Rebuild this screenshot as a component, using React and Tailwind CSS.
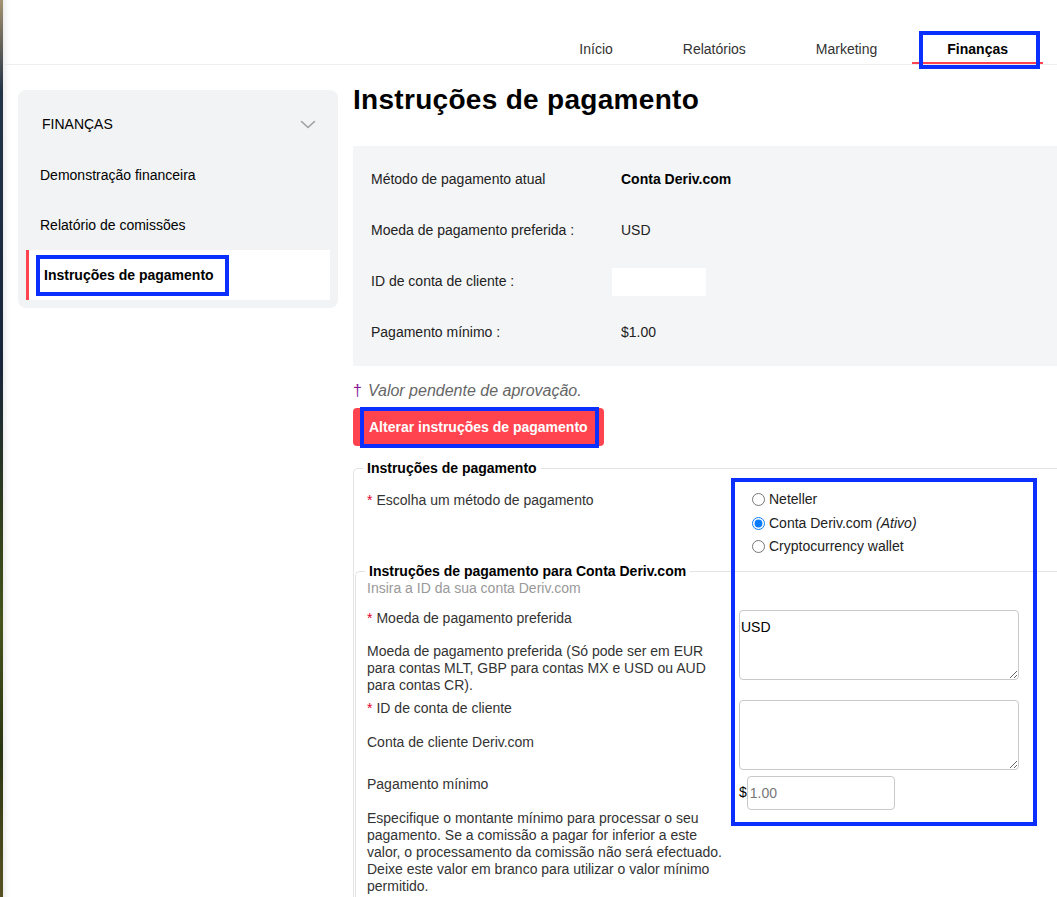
import React from 'react';

const font = { fontFamily: '"Liberation Sans", Arial, sans-serif' };

const tabs = ['Início', 'Relatórios', 'Marketing', 'Finanças'];

const infoRows = [
  { label: 'Método de pagamento atual', value: 'Conta Deriv.com', bold: true },
  { label: 'Moeda de pagamento preferida :', value: 'USD' },
  { label: 'ID de conta de cliente :', blank: true },
  { label: 'Pagamento mínimo :', value: '$1.00' },
];

function Req() {
  return <span className="text-[#e4002b] mr-[4px]">*</span>;
}

function Chevron() {
  return (
    <svg width="16" height="9" viewBox="0 0 16 9" fill="none" stroke="#9a9a9a" strokeWidth="1.4" strokeLinecap="round" strokeLinejoin="round">
      <polyline points="1.5,1.5 8,7.5 14.5,1.5" />
    </svg>
  );
}

function Radio({ checked, children }) {
  return (
    <label className="flex items-center gap-[4px] h-[23.5px]">
      <input type="radio" name="method" defaultChecked={checked} className="w-[13px] h-[13px] m-0 accent-[#0a7cff]" />
      <span>{children}</span>
    </label>
  );
}

export default function App() {
  return (
    <div className="relative flex min-h-screen bg-white text-[14px] leading-[17px] text-[#333]" style={font}>
      {/* desktop wallpaper peeking at the edge */}
      <div className="w-[3px] shrink-0 bg-[linear-gradient(to_bottom,#a39272_0%,#6f6a5c_4%,#233449_10%,#17243a_40%,#2c3a1c_55%,#46541c_68%,#2a3512_82%,#5c5424_100%)]" />

      <div className="flex-1 min-w-0 shadow-[inset_7px_0_6px_-5px_rgba(0,0,0,0.10)]">
        {/* header */}
        <div className="h-[65px] border-b border-[#eeeeee] flex items-end justify-end pr-[14px]">
          {tabs.map(t => {
            const active = t === 'Finanças';
            return (
              <div
                key={t}
                className={`relative h-[32px] pt-[9px] px-[35px] border-b-2 ${active ? 'border-[#ff444f] font-bold text-black' : 'border-transparent'}`}
              >
                {t}
                {active && (
                  <div className="absolute left-[7px] right-[3px] top-[-1px] bottom-[-7px] border-4 border-[#0b2fff]" />
                )}
              </div>
            );
          })}
        </div>

        <div className="flex pl-[15px] gap-[15px]">
          {/* sidebar */}
          <div className="w-[320px] shrink-0 mt-[25px] self-start bg-[#f2f3f4] rounded-[8px] p-[8px]">
            <div className="h-[52px] flex items-center justify-between pl-[16px] pr-[14px] text-black">
              <span>FINANÇAS</span>
              <Chevron />
            </div>
            <div className="h-[50px] flex items-center pl-[14px] text-black">Demonstração financeira</div>
            <div className="h-[50px] flex items-center pl-[14px] text-black">Relatório de comissões</div>
            <div className="relative h-[50px] flex items-center bg-white border-l-[3px] border-[#ff444f] pl-[15px] font-bold text-black">
              Instruções de pagamento
              <div className="absolute left-[7px] top-[5px] w-[193px] h-[41px] border-4 border-[#0b2fff]" />
            </div>
          </div>

          {/* main */}
          <div className="flex-1 min-w-0">
            <h1 className="mt-[19px] text-[28px] leading-[32px] tracking-[0.3px] font-bold text-black">Instruções de pagamento</h1>

            <div className="mt-[30px] bg-[#f4f5f6] py-[8px]">
              {infoRows.map(r => (
                <div key={r.label} className="h-[51px] flex items-center pl-[18px]">
                  <div className="w-[241px] shrink-0 text-[#222]">{r.label}</div>
                  {r.blank ? (
                    <div className="w-[94px] h-[28px] bg-white" />
                  ) : (
                    <div className={`pl-[9px] ${r.bold ? 'font-bold text-black' : 'text-[#222]'}`}>{r.value}</div>
                  )}
                </div>
              ))}
            </div>

            <p className="mt-[15px] text-[16px] leading-[20px]">
              <span className="text-[#8a1c9a] mr-[6px]">†</span>
              <span className="italic text-[#666]">Valor pendente de aprovação.</span>
            </p>

            <div className="mt-[7px]">
              <button className="relative h-[38px] px-[16px] bg-[#ff444f] rounded-[4px] text-white font-bold text-[14px]">
                Alterar instruções de pagamento
                <span className="absolute left-[7px] right-[5px] top-[-1px] bottom-[-2px] border-4 border-[#0b2fff]" />
              </button>
            </div>

            <fieldset className="mt-[14px] border-t border-l border-[#e3e3e3] rounded-tl-[5px]">
              <legend className="ml-[9px] px-[4px] font-bold text-black">Instruções de pagamento</legend>

              <div className="flex pl-[13px] pt-[11px] pb-[4px]">
                <div className="w-[360px] shrink-0 pt-[4px]"><Req />Escolha um método de pagamento</div>
                <div className="ml-[12px] pl-[13px] flex flex-col text-[#222]">
                  <Radio>Neteller</Radio>
                  <Radio checked>Conta Deriv.com <i>(Ativo)</i></Radio>
                  <Radio>Cryptocurrency wallet</Radio>
                </div>
              </div>

              <fieldset className="ml-[1px] border-t border-l border-[#e3e3e3] rounded-tl-[5px]">
                <legend className="ml-[9px] px-[4px] font-bold text-black">Instruções de pagamento para Conta Deriv.com</legend>
                <div className="pl-[11px] text-[#999]">Insira a ID da sua conta Deriv.com</div>

                <div className="flex flex-col gap-[6px] pl-[11px] pt-[13px] pb-[20px]">
                  <div className="flex items-start">
                    <div className="w-[360px] shrink-0">
                      <div><Req />Moeda de pagamento preferida</div>
                      <div className="mt-[16px]">Moeda de pagamento preferida (Só pode ser em EUR para contas MLT, GBP para contas MX e USD ou AUD para contas CR).</div>
                    </div>
                    <textarea defaultValue="USD" className="ml-[12px] w-[280px] h-[70px] border border-[#c9c9c9] rounded-[4px] pt-[8px] px-[1px] text-black leading-[17px] outline-none" />
                  </div>

                  <div className="flex items-start">
                    <div className="w-[360px] shrink-0">
                      <div><Req />ID de conta de cliente</div>
                      <div className="mt-[17px]">Conta de cliente Deriv.com</div>
                    </div>
                    <textarea className="ml-[12px] w-[280px] h-[70px] border border-[#c9c9c9] rounded-[4px] pt-[8px] px-[1px] outline-none" />
                  </div>

                  <div className="flex items-start">
                    <div className="w-[360px] shrink-0">
                      <div>Pagamento mínimo</div>
                      <div className="mt-[17px]">Especifique o montante mínimo para processar o seu pagamento. Se a comissão a pagar for inferior a este valor, o processamento da comissão não será efectuado. Deixe este valor em branco para utilizar o valor mínimo permitido.</div>
                    </div>
                    <div className="ml-[12px] flex items-center text-black">
                      <span>$</span>
                      <input placeholder="1.00" className="w-[148px] h-[34px] border border-[#c9c9c9] rounded-[4px] px-[2px] placeholder:text-[#777] outline-none" />
                    </div>
                  </div>
                </div>
              </fieldset>
            </fieldset>
          </div>
        </div>
      </div>

      {/* annotation around the method / inputs column */}
      <div className="absolute left-[731px] top-[478px] w-[306px] h-[348px] border-4 border-[#0b2fff] pointer-events-none" />
    </div>
  );
}
